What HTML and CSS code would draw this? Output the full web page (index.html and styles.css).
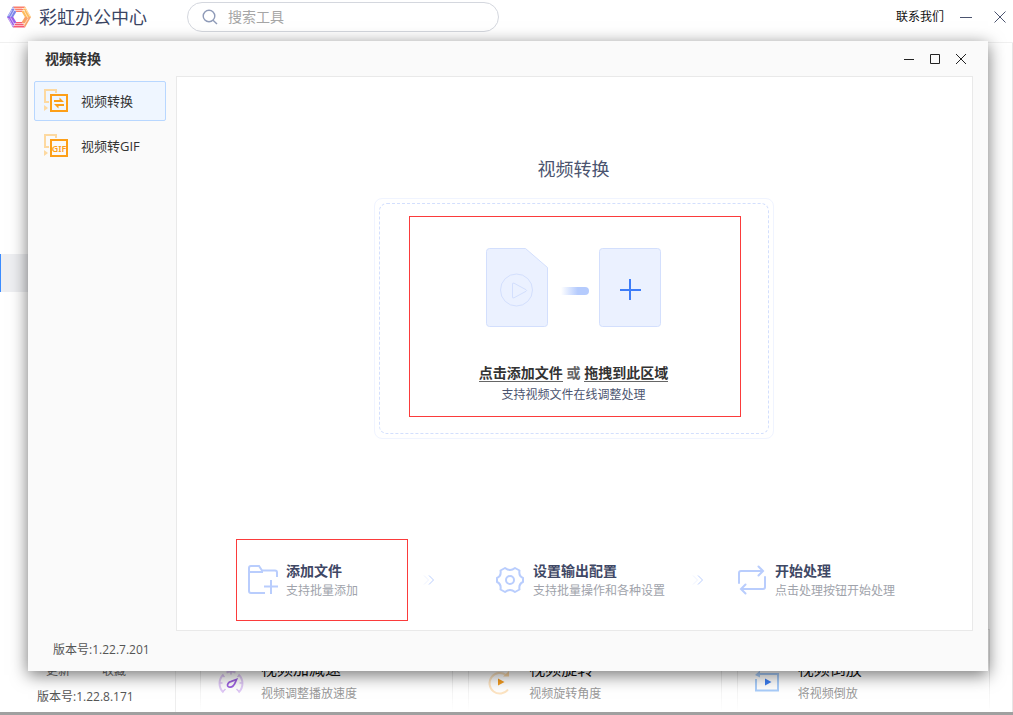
FILE: index.html
```html
<!DOCTYPE html>
<html lang="zh-CN">
<head>
<meta charset="utf-8">
<title>彩虹办公中心</title>
<link rel="stylesheet" href="styles.css">
</head>
<body>
<div class="app">
  <header class="app-header">
    <div class="brand">
      <svg width="24" height="24" viewBox="0 0 24 24" aria-hidden="true">
        <path d="M6 1.500h12l-3.200 5.500H9.200z" fill="#fb7f6c"/>
        <path d="M18 1.500 24 12h-6.200l-3-5z" fill="#fdbb5c"/>
        <path d="M24 12l-6 10.500-3.200-5.500 3-5z" fill="#f9a268"/>
        <path d="M18 22.500H6L9.200 17h5.600z" fill="#f65c74"/>
        <path d="M6 22.500 0 12h6.200l3 5z" fill="#9a5fe6"/>
        <path d="M0 12 6 1.500 9.200 7l-3 5z" fill="#7d86ea"/>
        <path d="M5 3.500h11.500M7 5.500h11M19 3.500l-4 0M16.500 5l4.500 8M19 4.500l4 7M21 13.500l-4.500 7.500M7 18.500h11M5.500 20.500h11M3.500 12.500l4.500 8M1.500 13l4 7.500M3.500 12 8 4M1.500 11 5 5" fill="none" stroke="#fff" stroke-width=".7" opacity=".8"/>
      </svg>
      <span>彩虹办公中心</span>
    </div>
    <label class="search">
      <svg width="16" height="16" viewBox="0 0 16 16" fill="none" stroke="#8f9bb8" stroke-width="1.400" aria-hidden="true"><circle cx="7" cy="7" r="5.800"/><path d="M11 11.300l4 3.700"/></svg>
      <input type="search" placeholder="搜索工具" aria-label="搜索工具">
    </label>
    <div class="app-actions">
      <a class="contact" href="#">联系我们</a>
      <button class="icon-btn" aria-label="最小化"><svg width="12" height="12" viewBox="0 0 12 12" stroke="#4b546f"><path d="M0 6.500h12"/></svg></button>
      <button class="icon-btn" aria-label="关闭"><svg width="12" height="12" viewBox="0 0 12 12" stroke="#4b546f"><path d="M.5.5l11 11M11.500.5l-11 11"/></svg></button>
    </div>
  </header>
  <div class="app-body">
    <aside class="app-side">
      <div class="side-current"></div>
      <div class="side-links"><a href="#">更新</a><a href="#">收藏</a></div>
      <div class="app-version">版本号:1.22.8.171</div>
    </aside>
    <main class="tools">
      <article class="tool">
        <svg width="28" height="28" viewBox="0 0 28 28" fill="none" aria-hidden="true">
          <path d="M6.500 24.500a12.200 12.200 0 0 1 0-18M21.500 24.500a12.200 12.200 0 0 0 0-18M9.500 4.500a12.200 12.200 0 0 1 9 0" stroke="#e0caf6" stroke-width="2"/>
          <path d="M14 3v3.500M2 15h3.500M22.500 15H26M5.500 7l2 2M22.500 7l-2 2M6 23.500l2.500-2.500M22 23.500 19.500 21" stroke="#dcc3f4" stroke-width="1.500"/>
          <path d="M19.500 11.500c-1 2.700-2 5.200-3.500 6.500-1.500 1.300-4.500 1.800-5.300 0-.7-1.800.8-3.600 3-4.300z" stroke="#9c60df" stroke-width="1.800"/>
        </svg>
        <div><h3>视频加减速</h3><p>视频调整播放速度</p></div>
      </article>
      <article class="tool">
        <svg width="28" height="28" viewBox="0 0 28 28" fill="none" aria-hidden="true">
          <path d="M23 21.500A10.300 10.300 0 1 1 21 7" stroke="#fde4c2" stroke-width="2"/>
          <path d="M18 8.500h6V3z" fill="#fbd7a5"/>
          <path d="M13 10.500v7l6.500-3.500z" fill="#f29a1f"/>
        </svg>
        <div><h3>视频旋转</h3><p>视频旋转角度</p></div>
      </article>
      <article class="tool">
        <svg width="28" height="28" viewBox="0 0 28 28" fill="none" aria-hidden="true">
          <path d="M6 6h18v16.500H2V11" stroke="#a9cdfa" stroke-width="2"/>
          <path d="M1 7l5-4.500v7z" fill="#a9cdfa"/>
          <path d="M11 10.500v7l6.500-3.500z" fill="#3c7df0"/>
        </svg>
        <div><h3>视频倒放</h3><p>将视频倒放</p></div>
      </article>
    </main>
  </div>
</div>

<section class="window" role="dialog" aria-labelledby="window-title">
  <header class="window-header">
    <h1 id="window-title">视频转换</h1>
    <div class="window-controls">
      <button class="icon-btn" aria-label="最小化"><svg width="12" height="12" viewBox="0 0 12 12" stroke="#222"><path d="M1 6.500h10"/></svg></button>
      <button class="icon-btn" aria-label="最大化"><svg width="12" height="12" viewBox="0 0 12 12" stroke="#222" fill="none"><path d="M1.500 1.500h9v9h-9z"/></svg></button>
      <button class="icon-btn" aria-label="关闭"><svg width="12" height="12" viewBox="0 0 12 12" stroke="#222"><path d="M1 1l10 10M11 1 1 11"/></svg></button>
    </div>
  </header>
  <nav class="menu">
    <button class="menu-item is-active">
      <svg width="26" height="26" viewBox="0 0 26 26" fill="none" aria-hidden="true">
        <path d="M6 14H2V2h11v3" stroke="#fdd9a0" stroke-width="2"/><path d="M1 17v6l4-3z" fill="#fdd9a0"/>
        <path d="M8 7h16v16H8z" stroke="#fd9f18" stroke-width="2"/>
        <path d="M16.500 9.500 21 14H11v-2h5.500zM15.500 20.500 11 16h10v2h-5.500z" fill="#fd9f18"/>
      </svg>
      <span>视频转换</span>
    </button>
    <button class="menu-item">
      <svg width="26" height="26" viewBox="0 0 26 26" fill="none" aria-hidden="true">
        <path d="M6 14H2V2h11v3" stroke="#fdd9a0" stroke-width="2"/><path d="M1 17v6l4-3z" fill="#fdd9a0"/>
        <path d="M8 7h16v16H8z" stroke="#fd9f18" stroke-width="2"/>
        <text x="16" y="19" text-anchor="middle" class="gif-mark">GIF</text>
      </svg>
      <span>视频转GIF</span>
    </button>
  </nav>
  <div class="panel">
    <h2>视频转换</h2>
    <div class="dropzone">
      <div class="dropzone-dash">
        <div class="drop-focus">
          <svg width="176" height="80" viewBox="0 0 176 80" fill="none" aria-hidden="true">
            <defs><linearGradient id="trail"><stop stop-color="#b5cbfd" stop-opacity="0"/><stop offset=".6" stop-color="#b5cbfd"/></linearGradient></defs>
            <path d="M3.500.5h36l22 19v56a3 3 0 0 1-3 3h-55a3 3 0 0 1-3-3v-72a3 3 0 0 1 3-3z" fill="#ebf1ff" stroke="#d3dffd"/>
            <circle cx="30.500" cy="42" r="16" stroke="#d3dffd"/>
            <path d="M26.500 36v13q0 1.500 1.500.8l12-6.500q1.200-.8 0-1.600l-12-6.500q-1.500-.7-1.500.8z" stroke="#d3dffd"/>
            <path d="M75 39h24a4 4 0 0 1 0 8H75z" fill="url(#trail)"/>
            <rect x="113.500" y=".5" width="61" height="78" rx="3" fill="#ebf1ff" stroke="#d3dffd"/>
            <path d="M144 31v21M134 42h21" stroke="#3e7df8" stroke-width="2"/>
          </svg>
          <p class="drop-text"><a href="#">点击添加文件</a> <span>或</span> <a href="#">拖拽到此区域</a></p>
          <p class="drop-hint">支持视频文件在线调整处理</p>
        </div>
      </div>
    </div>
    <div class="steps">
      <div class="step is-marked">
        <svg width="30" height="30" viewBox="0 0 30 30" fill="none" stroke="#b9cdfd" stroke-width="2" aria-hidden="true"><path d="M17 28H3q-2 0-2-2V3q0-2 2-2h8l3 4.500h13q2 0 2 2V12M1 7h14M23 15v14M16 21.500h14"/></svg>
        <div><h3>添加文件</h3><p>支持批量添加</p></div>
      </div>
      <svg class="arrow" width="12" height="10" viewBox="0 0 12 10" fill="none" aria-hidden="true"><path d="M1 .5 5.500 5 1 9.500" stroke="#edf2ff"/><path d="M6 .5 10.500 5 6 9.500" stroke="#b9cdfd"/></svg>
      <div class="step">
        <svg width="30" height="30" viewBox="0 0 30 30" fill="none" stroke="#b9cdfd" stroke-width="2" stroke-linejoin="round" aria-hidden="true"><path d="M10 3q5 4 10 0l4.500 2.500q-1 5.500 3.500 7.500v4q-4.500 2-3.500 7.500L20 27q-5-4-10 0l-4.500-2.500Q6.500 19 2 17v-4q4.500-2 3.500-7.500z"/><circle cx="15" cy="15" r="4"/></svg>
        <div><h3>设置输出配置</h3><p>支持批量操作和各种设置</p></div>
      </div>
      <svg class="arrow" width="12" height="10" viewBox="0 0 12 10" fill="none" aria-hidden="true"><path d="M1 .5 5.500 5 1 9.500" stroke="#edf2ff"/><path d="M6 .5 10.500 5 6 9.500" stroke="#b9cdfd"/></svg>
      <div class="step">
        <svg width="30" height="30" viewBox="0 0 30 30" fill="none" stroke="#b9cdfd" stroke-width="2" stroke-linecap="round" aria-hidden="true"><path d="M2 18V8q0-2 2-2h21M21.500 1.500 26 6l-4.500 4.500M28 12v10q0 2-2 2H5M8.500 19.500 4 24l4.500 4.500"/></svg>
        <div><h3>开始处理</h3><p>点击处理按钮开始处理</p></div>
      </div>
    </div>
  </div>
  <footer class="window-version">版本号:1.22.7.201</footer>
</section>
</body>
</html>
```
FILE: styles.css
```css
* { box-sizing: border-box; }

body {
  margin: 0;
  height: 100vh;
  padding-bottom: 3px;
  overflow: hidden;
  background: #a0a0a0;
  color: #333;
  font: 12px/18px "Open Sans", "Noto Sans CJK SC", sans-serif;
}

h1, h2, h3, p { margin: 0; }

a { color: inherit; text-decoration: none; }

button { padding: 0; border: 0; background: none; color: inherit; font: inherit; }

svg { display: block; flex: none; }

.icon-btn { display: flex; }

/* Main application behind the tool window */
.app {
  display: flex;
  flex-direction: column;
  height: 100%;
  background: #fff;
}

.app-header {
  display: flex;
  align-items: center;
  height: 43px;
  padding: 0 7px 8px;
  border-bottom: 1px solid #f0f0f0;
}

.brand {
  display: flex;
  align-items: center;
  gap: 8px;
  width: 180px;
  color: #3b4563;
  font-size: 18px;
}

.search {
  display: flex;
  align-items: center;
  gap: 10px;
  width: 312px;
  height: 30px;
  padding: 0 14px;
  border: 1px solid #d4d7de;
  border-radius: 15px;
}

.search input {
  flex: 1;
  min-width: 0;
  padding: 0;
  border: 0;
  outline: 0;
  background: none;
  font: inherit;
  font-size: 14px;
}

.search input::placeholder { color: #a6a6a6; }

.app-actions {
  display: flex;
  align-items: center;
  margin-left: auto;
}

.contact { margin-right: 16px; color: #111; }

.app-actions .icon-btn + .icon-btn { margin-left: 22px; }

.app-body { display: flex; flex: 1; min-height: 0; }

.app-side {
  display: flex;
  flex-direction: column;
  width: 176px;
  border-right: 1px solid #eee;
}

.side-current {
  height: 38px;
  margin-top: 211px;
  border-left: 1px solid #3c8cff;
  background: #eeeff2;
}

.side-links {
  display: flex;
  gap: 32px;
  margin-top: auto;
  padding-left: 46px;
  color: #666;
}

.app-version { padding: 8px 0 6px 37px; color: #555; }

.tools {
  display: grid;
  grid-template-columns: repeat(3, 1fr);
  gap: 15px;
  align-items: end;
  flex: 1;
  padding: 0 22px 0 24px;
  border-right: 1px solid #e6e6e6;
}

.tool {
  display: flex;
  align-items: flex-start;
  gap: 16px;
  height: 83px;
  padding: 28px 16px 0;
  border: 1px solid;
  border-image: linear-gradient(#e4e4e4 40%, transparent) 1;
}

.tool svg { margin-top: 10px; }

.tool h3 { color: #111; font-size: 16px; font-weight: 400; line-height: 22px; }

.tool p { padding-top: 4px; color: #999; line-height: 20px; }

/* Floating tool window */
.window {
  position: absolute;
  inset: 41px 25px 44px 28px;
  display: grid;
  grid-template: 35px 1fr 40px / 148px 1fr;
  padding-right: 15px;
  background: #fafafa;
  box-shadow: 0 4px 16px rgba(0, 0, 0, .55);
}

.window-header {
  grid-column: 1 / -1;
  display: flex;
  align-items: center;
  justify-content: space-between;
  padding-left: 17px;
}

.window-header h1 { font-size: 14px; font-weight: 700; }

.window-controls { display: flex; gap: 14px; padding-right: 6px; }

.menu {
  display: flex;
  flex-direction: column;
  gap: 5px;
  padding: 5px 10px 0 6px;
}

.menu-item {
  display: flex;
  align-items: center;
  gap: 12px;
  height: 40px;
  padding-left: 8px;
  border: 1px solid transparent;
  border-radius: 2px;
  font-size: 13px;
}

.menu-item.is-active { border-color: #b8d7ff; background: #eff6ff; }

.gif-mark { fill: #fd9f18; font: 600 9px "Noto Sans", sans-serif; }

.panel {
  display: flex;
  flex-direction: column;
  align-items: center;
  padding: 80px 2px 9px 0;
  border: 1px solid #e9e9e9;
  background: #fff;
}

.panel h2 { color: #4b546f; font-size: 18px; font-weight: 400; line-height: 24px; }

.dropzone {
  width: 400px;
  margin-top: 17px;
  padding: 4px;
  border: 1px solid #f0f4ff;
  border-radius: 8px;
}

.dropzone-dash {
  padding: 12px 27px 16px 29px;
  border: 1px dashed #d3dffd;
  border-radius: 8px;
}

.drop-focus {
  display: flex;
  flex-direction: column;
  align-items: center;
  padding: 31px 2px 11px 0;
  border: 1px solid #fb3b3b;
}

.drop-text {
  margin-top: 35px;
  font-size: 14px;
  font-weight: 700;
  line-height: 20px;
}

.drop-text a { border-bottom: 1px solid #666; display: inline-block; line-height: 17px; }

.drop-text span { color: #666; }

.drop-hint { padding-top: 2px; color: #4b546f; line-height: 20px; }

.steps {
  display: flex;
  align-items: center;
  justify-content: center;
  width: 100%;
  margin-top: auto;
  padding-right: 16px;
}

.step { display: flex; align-items: center; gap: 8px; }

.step div { padding-top: 2px; }

.step.is-marked {
  width: 172px;
  height: 82px;
  padding-left: 11px;
  border: 1px solid #fb3b3b;
}

.step h3 { color: #3f4865; font-size: 14px; font-weight: 700; line-height: 20px; }

.step p { color: #a0a3ab; line-height: 20px; }

.arrow { margin: 0 60px 0 15px; }

.step + .arrow ~ .arrow { margin: 0 33px 0 27px; }

.window-version {
  grid-column: 1 / -1;
  padding: 10px 0 0 25px;
  color: #555;
}
```
